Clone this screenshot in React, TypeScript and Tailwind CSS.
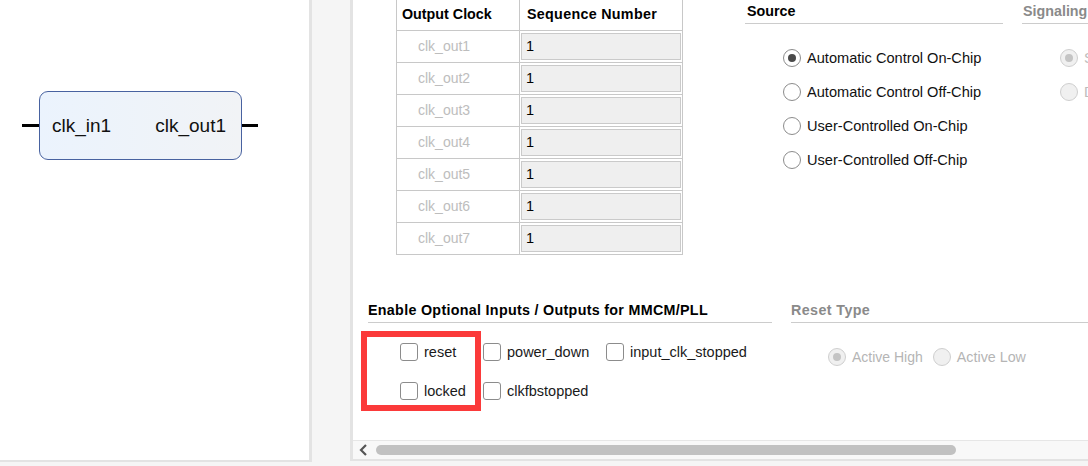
import React from "react";

const font = { fontFamily: '"Liberation Sans", Arial, sans-serif' };

function Radio({ checked, disabled }: { checked?: boolean; disabled?: boolean }) {
  return (
    <span
      className={
        "flex h-[18px] w-[18px] shrink-0 items-center justify-center rounded-full border " +
        (disabled ? "border-[#cfcfcf] bg-[#f0f0f0]" : "border-[#8c8c8c] bg-white")
      }
    >
      {checked ? (
        <span className={"h-[8px] w-[8px] rounded-full " + (disabled ? "bg-[#c4c4c4]" : "bg-[#4a4a4a]")} />
      ) : null}
    </span>
  );
}

function Check({ label }: { label: string }) {
  return (
    <div className="flex items-center gap-[6px]">
      <span className="h-[18px] w-[18px] shrink-0 rounded-[3px] border border-[#8c8c8c] bg-white" />
      <span className="whitespace-nowrap text-[14.5px] leading-[16px] text-[#1a1a1a]">{label}</span>
    </div>
  );
}

export default function App() {
  const rows = [1, 2, 3, 4, 5, 6, 7];
  const sources = [
    { l: "Automatic Control On-Chip", c: true },
    { l: "Automatic Control Off-Chip", c: false },
    { l: "User-Controlled On-Chip", c: false },
    { l: "User-Controlled Off-Chip", c: false },
  ];
  return (
    <div className="flex h-[466px] w-[1088px] overflow-hidden bg-[#f5f5f5]" style={font}>
      {/* Left diagram panel */}
      <div className="h-[462px] w-[312px] shrink-0 border-r-[3px] border-b-[2px] border-[#e3e3e3] bg-white">
        <div className="ml-[22px] mt-[91px] flex items-center">
          <div className="h-[3px] w-[17px] bg-black" />
          <div className="flex h-[69px] w-[203px] items-center justify-between rounded-[9px] border border-[#4862a0] bg-gradient-to-r from-[#ebf3fd] to-[#f1f3f6] pl-[12px] pr-[15px]">
            <span className="text-[19px] leading-[20px] text-[#111]">clk_in1</span>
            <span className="text-[19px] leading-[20px] text-[#111]">clk_out1</span>
          </div>
          <div className="h-[3px] w-[16px] bg-black" />
        </div>
      </div>

      {/* gap */}
      <div className="w-[38px] shrink-0" />

      {/* Right panel */}
      <div className="relative flex h-[461px] w-[738px] shrink-0 flex-col border-l-[3px] border-b-[2px] border-[#e3e3e3] bg-white">
        <div className="flex-1">
          {/* Top section */}
          <div className="flex">
            {/* Table */}
            <div className="ml-[43px] w-[287px] shrink-0 border-l border-r border-[#c8c8c8]">
              <div className="flex h-[31px] border-b border-[#c8c8c8]">
                <div className="flex w-[123px] items-center border-r border-[#c8c8c8] pl-[5px] text-[14.3px] font-bold text-black">
                  Output Clock
                </div>
                <div className="flex flex-1 items-center pl-[7px] text-[14.3px] font-bold tracking-[0.3px] text-black">
                  Sequence Number
                </div>
              </div>
              {rows.map((r) => (
                <div key={r} className="flex h-[32px] border-b border-[#c8c8c8]">
                  <div className="flex w-[123px] items-center border-r border-[#c8c8c8] pl-[21px] text-[14px] text-[#bdbdbd]">
                    clk_out{r}
                  </div>
                  <div className="flex flex-1 items-center px-[1px] py-[2px]">
                    <div className="flex h-full w-full items-center border border-[#cacaca] bg-[#efefef] pl-[4px] text-[14.5px] text-black">
                      1
                    </div>
                  </div>
                </div>
              ))}
            </div>

            {/* Source */}
            <div className="ml-[62px] w-[258px] shrink-0">
              <div className="flex h-[24px] items-start border-b border-[#cccccc] pl-[2px] pt-[3px] text-[14.3px] font-bold leading-[16px] text-black">
                Source
              </div>
              <div className="ml-[38px] mt-[25px] flex flex-col gap-[16px]">
                {sources.map((s) => (
                  <div key={s.l} className="flex items-center gap-[6px]">
                    <Radio checked={s.c} />
                    <span className="whitespace-nowrap text-[14.6px] leading-[18px] text-[#111]">{s.l}</span>
                  </div>
                ))}
              </div>
            </div>

            {/* Signaling */}
            <div className="ml-[19px] min-w-0 flex-1 overflow-hidden">
              <div className="flex h-[24px] items-start whitespace-nowrap border-b border-[#cccccc] pl-[1px] pt-[3px] text-[14.3px] font-bold leading-[16px] text-[#8a8a8a]">
                Signaling
              </div>
              <div className="ml-[38px] mt-[25px] flex flex-col gap-[16px]">
                <div className="flex items-center gap-[6px]">
                  <Radio checked disabled />
                  <span className="text-[14.5px] leading-[18px] text-[#bdbdbd]">S</span>
                </div>
                <div className="flex items-center gap-[6px]">
                  <Radio disabled />
                  <span className="text-[14.5px] leading-[18px] text-[#bdbdbd]">D</span>
                </div>
              </div>
            </div>
          </div>

          {/* Bottom section */}
          <div className="mt-[43px] flex">
            <div className="ml-[15px] w-[404px] shrink-0">
              <div className="flex h-[25px] items-start whitespace-nowrap border-b border-[#cccccc] pt-[4px] text-[14.3px] font-bold leading-[16px] tracking-[0.3px] text-black">
                Enable Optional Inputs / Outputs for MMCM/PLL
              </div>
              <div className="mt-[20px] grid grid-cols-[83px_123px_1fr] gap-y-[21px] pl-[32px]">
                <Check label="reset" />
                <Check label="power_down" />
                <Check label="input_clk_stopped" />
                <Check label="locked" />
                <Check label="clkfbstopped" />
              </div>
            </div>
            <div className="ml-[19px] min-w-0 flex-1">
              <div className="flex h-[25px] items-start border-b border-[#cccccc] pt-[4px] text-[14.3px] font-bold leading-[16px] tracking-[0.4px] text-[#8a8a8a]">
                Reset Type
              </div>
              <div className="ml-[37px] mt-[25px] flex items-center">
                <Radio checked disabled />
                <span className="ml-[6px] text-[14px] leading-[18px] text-[#b5b5b5]">Active High</span>
                <span className="ml-[10px]">
                  <Radio disabled />
                </span>
                <span className="ml-[6px] text-[14.3px] leading-[18px] text-[#b5b5b5]">Active Low</span>
              </div>
            </div>
          </div>
        </div>

        {/* Scrollbar */}
        <div className="flex h-[19px] items-center border-t border-[#e6e6e6] bg-[#f8f8f8]">
          <svg width="23" height="18" viewBox="0 0 23 18" className="shrink-0">
            <path d="M13 4 L8 9 L13 14" fill="none" stroke="#555" strokeWidth="2.2" />
          </svg>
          <div className="h-[10px] w-[580px] rounded-full bg-[#c1c1c1]" />
        </div>

        {/* Red annotation box */}
        <div className="absolute left-[8px] top-[331px] h-[80px] w-[120px] border-[6px] border-[#fb3a3a]" />
      </div>
    </div>
  );
}
